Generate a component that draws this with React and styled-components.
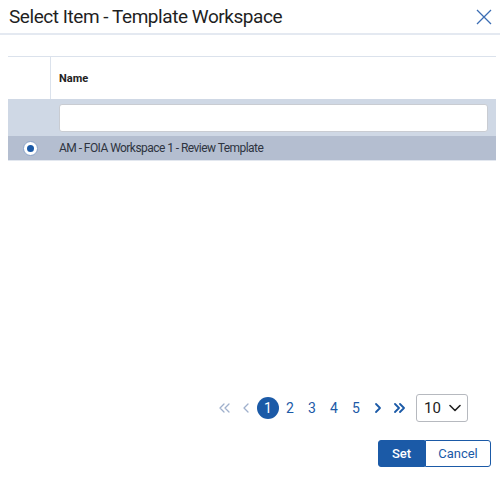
import React, { useState } from "react";
import styled, { createGlobalStyle } from "styled-components";

const GlobalStyle = createGlobalStyle`
  html, body {
    margin: 0;
    padding: 0;
    background: #ffffff;
  }
  body {
    font-family: Roboto, "Liberation Sans", Arial, sans-serif;
    color: #222;
  }
`;

const Dialog = styled.div`
  width: 500px;
  height: 478px;
  display: flex;
  flex-direction: column;
  box-sizing: border-box;
`;

const Header = styled.div`
  height: 33px;
  display: flex;
  align-items: center;
  justify-content: space-between;
  padding: 0 8px 0 9px;
  border-bottom: 2px solid #e4e9f1;
`;

const Title = styled.h1`
  margin: 0;
  font-size: 19px;
  font-weight: 400;
  color: #1f1f1f;
  letter-spacing: -0.45px;
`;

const CloseButton = styled.button`
  border: none;
  background: none;
  padding: 0;
  width: 16px;
  height: 16px;
  display: flex;
  cursor: pointer;
`;

const Body = styled.div`
  flex: 1;
  padding: 21px 4px 0 8px;
`;

const Table = styled.div`
  border-top: 1px solid #dbe2ec;
  border-bottom: 1px solid #e2e7ef;
`;

const Row = styled.div`
  display: grid;
  grid-template-columns: 43px 1fr;
  height: ${(p) => p.h}px;
  background: ${(p) => p.bg || "#fff"};
  align-items: center;
`;

const Cell = styled.div`
  height: 100%;
  display: flex;
  align-items: center;
  justify-content: ${(p) => (p.center ? "center" : "flex-start")};
  padding: ${(p) => (p.center ? "0" : "0 8px")};
  border-right: ${(p) => (p.divider ? "1px solid #dbe2ec" : "none")};
  box-sizing: border-box;
`;

const HeadText = styled.span`
  font-size: 11px;
  font-weight: 700;
  color: #222;
`;

const FilterInput = styled.input`
  width: 100%;
  height: 28px;
  box-sizing: border-box;
  border: 1px solid #c9ccd2;
  border-radius: 3px;
  background: #fff;
  outline: none;
`;

const RowText = styled.span`
  font-size: 12px;
  letter-spacing: -0.55px;
  color: #2e3440;
`;

const Radio = styled.span`
  width: 13px;
  height: 13px;
  border-radius: 50%;
  background: #fff;
  border: 1px solid #8aa3c8;
  display: flex;
  align-items: center;
  justify-content: center;
  margin-left: 1px;

  &::after {
    content: "";
    width: 7px;
    height: 7px;
    border-radius: 50%;
    background: #1b5aa7;
  }
`;

const Pager = styled.div`
  display: flex;
  justify-content: flex-end;
  align-items: center;
  padding-right: 32px;
  margin-bottom: 18px;
`;

const PageItem = styled.button`
  width: 22px;
  height: 22px;
  border: none;
  padding: 0;
  border-radius: 50%;
  display: flex;
  align-items: center;
  justify-content: center;
  font-family: inherit;
  font-size: 14px;
  color: ${(p) => (p.active ? "#fff" : p.muted ? "#9fb0cc" : "#1b5aa7")};
  background: ${(p) => (p.active ? "#1b5aa7" : "transparent")};
  cursor: pointer;
`;

const PageSize = styled.div`
  margin-left: 5px;
  width: 52px;
  height: 28px;
  box-sizing: border-box;
  border: 1px solid #b6b9bf;
  border-radius: 3px;
  display: flex;
  align-items: center;
  justify-content: space-between;
  padding: 0 6px 0 7px;
  font-size: 15px;
  color: #222;
`;

const Actions = styled.div`
  display: flex;
  justify-content: flex-end;
  padding: 0 9px 11px 0;
`;

const ActionButton = styled.button`
  height: 27px;
  box-sizing: border-box;
  font-family: inherit;
  font-size: 13px;
  padding: 0;
  width: ${(p) => p.w}px;
  border: 1px solid #1b5aa7;
  background: ${(p) => (p.primary ? "#1b5aa7" : "#fff")};
  color: ${(p) => (p.primary ? "#fff" : "#1b5aa7")};
  font-weight: ${(p) => (p.primary ? 500 : 400)};
  border-radius: ${(p) => (p.primary ? "3px 0 0 3px" : "0 3px 3px 0")};
  cursor: pointer;
`;

const Chevron = ({ dir = "right", double, color, bold }) => {
  const sw = bold ? 1.8 : 1.3;
  const one = dir === "right" ? "M4 3l4 4-4 4" : "M8 3L4 7l4 4";
  const two = dir === "right" ? "M1 3l4 4-4 4M6 3l4 4-4 4" : "M11 3L7 7l4 4M6 3L2 7l4 4";
  return (
    <svg width="12" height="14" viewBox="0 0 12 14" fill="none">
      <path d={double ? two : one} stroke={color} strokeWidth={sw} strokeLinecap="round" strokeLinejoin="round" />
    </svg>
  );
};

export default function App() {
  const [page, setPage] = useState(1);
  const [filter, setFilter] = useState("");

  return (
    <Dialog>
      <GlobalStyle />
      <Header>
        <Title>Select Item - Template Workspace</Title>
        <CloseButton aria-label="Close">
          <svg width="16" height="16" viewBox="0 0 16 16">
            <path d="M1 1l14 14M15 1L1 15" stroke="#3b6db3" strokeWidth="1.3" />
          </svg>
        </CloseButton>
      </Header>

      <Body>
        <Table>
          <Row h={42}>
            <Cell divider />
            <Cell>
              <HeadText>Name</HeadText>
            </Cell>
          </Row>
          <Row h={37} bg="#cfd8e5">
            <Cell />
            <Cell>
              <FilterInput value={filter} onChange={(e) => setFilter(e.target.value)} />
            </Cell>
          </Row>
          <Row h={24} bg="#b4bed0">
            <Cell center>
              <Radio />
            </Cell>
            <Cell>
              <RowText>AM - FOIA Workspace 1 - Review Template</RowText>
            </Cell>
          </Row>
        </Table>
      </Body>

      <Pager>
        <PageItem muted>
          <Chevron dir="left" double color="#9fb0cc" />
        </PageItem>
        <PageItem muted>
          <Chevron dir="left" color="#9fb0cc" />
        </PageItem>
        {[1, 2, 3, 4, 5].map((n) => (
          <PageItem key={n} active={page === n} onClick={() => setPage(n)}>
            {n}
          </PageItem>
        ))}
        <PageItem>
          <Chevron dir="right" color="#1b5aa7" bold />
        </PageItem>
        <PageItem>
          <Chevron dir="right" double color="#1b5aa7" bold />
        </PageItem>
        <PageSize>
          10
          <svg width="12" height="8" viewBox="0 0 12 8" fill="none">
            <path d="M1 1.5l5 5 5-5" stroke="#222" strokeWidth="1.6" strokeLinecap="round" strokeLinejoin="round" />
          </svg>
        </PageSize>
      </Pager>

      <Actions>
        <ActionButton primary w={47}>Set</ActionButton>
        <ActionButton w={66}>Cancel</ActionButton>
      </Actions>
    </Dialog>
  );
}
